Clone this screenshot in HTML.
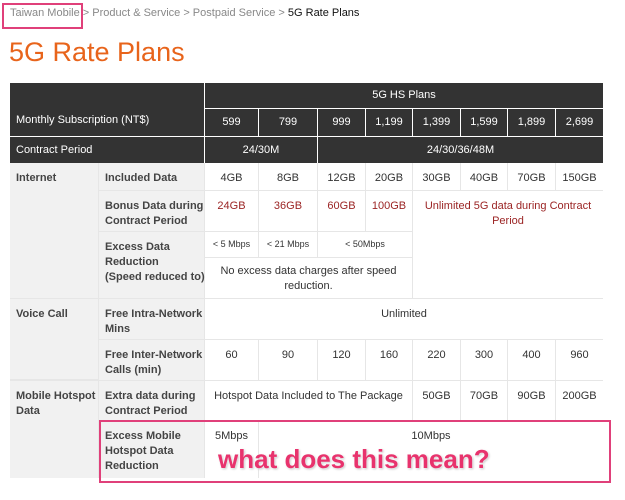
<!DOCTYPE html>
<html><head><meta charset="utf-8"><style>
*{margin:0;padding:0;box-sizing:border-box}
body{width:625px;height:500px;background:#fff;font-family:"Liberation Sans",Arial,sans-serif;position:relative;overflow:hidden}
.a{position:absolute}
.c{position:absolute;display:flex;align-items:center;justify-content:center;text-align:center;font-size:11px;color:#333;line-height:15px}
.d{background:#333;color:#fff}
.l{justify-content:flex-start;text-align:left;padding-left:6px;align-items:flex-start;padding-top:8px}
.g{background:#f1f1f1}
.b{font-weight:bold;color:#444}
.n{white-space:nowrap}
.t{align-items:flex-start;padding-top:8px}
.r{color:#9b2424}
.w{background:#fff}
</style></head><body>
<div class="a" style="left:10px;top:7px;font-size:11px;color:#888;white-space:nowrap">Taiwan Mobile &gt; Product &amp; Service &gt; Postpaid Service &gt; <span style="color:#111">5G Rate Plans</span></div>
<div class="a" style="left:2px;top:3px;width:81px;height:26px;border:2px solid #e0407a"></div>
<div class="a" style="left:9px;top:37px;font-size:27px;color:#e8641b">5G Rate Plans</div>

<div class="a" style="left:10px;top:83px;width:593px;height:80px;background:#fff"></div>
<div class="c d l" style="left:10px;top:83px;width:194px;height:53px;align-items:flex-end;padding-bottom:8px">Monthly Subscription (NT$)</div>
<div class="c d" style="left:205px;top:83px;width:398px;height:25px">5G HS Plans</div>
<div class="c d" style="left:205px;top:109px;width:53px;height:27px">599</div>
<div class="c d" style="left:259px;top:109px;width:58px;height:27px">799</div>
<div class="c d" style="left:318px;top:109px;width:47px;height:27px">999</div>
<div class="c d" style="left:366px;top:109px;width:46px;height:27px">1,199</div>
<div class="c d" style="left:413px;top:109px;width:47px;height:27px">1,399</div>
<div class="c d" style="left:461px;top:109px;width:46px;height:27px">1,599</div>
<div class="c d" style="left:508px;top:109px;width:47px;height:27px">1,899</div>
<div class="c d" style="left:556px;top:109px;width:47px;height:27px">2,699</div>
<div class="c d l" style="left:10px;top:137px;width:194px;height:26px;align-items:center;padding-top:0">Contract Period</div>
<div class="c d" style="left:205px;top:137px;width:112px;height:26px">24/30M</div>
<div class="c d" style="left:318px;top:137px;width:285px;height:26px">24/30/36/48M</div>

<div class="a" style="left:10px;top:163px;width:593px;height:315px;background:#e6e6e6"></div>
<div class="c g b l" style="left:10px;top:163px;width:88px;height:135px">Internet</div>
<div class="c g b l" style="left:10px;top:299px;width:88px;height:80px">Voice Call</div>
<div class="c g b l" style="left:10px;top:381px;width:88px;height:97px">Mobile Hotspot Data</div>

<div class="c g b l n" style="left:99px;top:163px;width:105px;height:27px">Included Data</div>
<div class="c g b l n" style="left:99px;top:191px;width:105px;height:40px">Bonus Data during<br>Contract Period</div>
<div class="c g b l n" style="left:99px;top:232px;width:105px;height:66px">Excess Data<br>Reduction<br>(Speed reduced to)</div>
<div class="c g b l n" style="left:99px;top:299px;width:105px;height:40px">Free Intra-Network<br>Mins</div>
<div class="c g b l n" style="left:99px;top:340px;width:105px;height:40px">Free Inter-Network<br>Calls (min)</div>
<div class="c g b l n" style="left:99px;top:381px;width:105px;height:39px">Extra data during<br>Contract Period</div>
<div class="c g b l n" style="left:99px;top:421px;width:105px;height:57px">Excess Mobile<br>Hotspot Data<br>Reduction</div>

<div class="c w t" style="left:205px;top:163px;width:53px;height:27px">4GB</div>
<div class="c w t" style="left:259px;top:163px;width:58px;height:27px">8GB</div>
<div class="c w t" style="left:318px;top:163px;width:47px;height:27px">12GB</div>
<div class="c w t" style="left:366px;top:163px;width:46px;height:27px">20GB</div>
<div class="c w t" style="left:413px;top:163px;width:47px;height:27px">30GB</div>
<div class="c w t" style="left:461px;top:163px;width:46px;height:27px">40GB</div>
<div class="c w t" style="left:508px;top:163px;width:47px;height:27px">70GB</div>
<div class="c w t" style="left:556px;top:163px;width:47px;height:27px">150GB</div>
<div class="c w t r" style="left:205px;top:191px;width:53px;height:40px">24GB</div>
<div class="c w t r" style="left:259px;top:191px;width:58px;height:40px">36GB</div>
<div class="c w t r" style="left:318px;top:191px;width:47px;height:40px">60GB</div>
<div class="c w t r" style="left:366px;top:191px;width:46px;height:40px">100GB</div>
<div class="c w t r" style="left:413px;top:191px;width:190px;height:107px;padding-left:10px;padding-right:10px">Unlimited 5G data during Contract Period</div>
<div class="c w" style="left:205px;top:232px;width:53px;height:25px;font-size:9px">&lt; 5 Mbps</div>
<div class="c w" style="left:259px;top:232px;width:58px;height:25px;font-size:9px">&lt; 21 Mbps</div>
<div class="c w" style="left:318px;top:232px;width:94px;height:25px;font-size:9px">&lt; 50Mbps</div>
<div class="c w t" style="left:205px;top:258px;width:207px;height:40px;padding:6px 14px 0">No excess data charges after speed reduction.</div>
<div class="c w t" style="left:205px;top:299px;width:398px;height:40px">Unlimited</div>
<div class="c w t" style="left:205px;top:340px;width:53px;height:40px">60</div>
<div class="c w t" style="left:259px;top:340px;width:58px;height:40px">90</div>
<div class="c w t" style="left:318px;top:340px;width:47px;height:40px">120</div>
<div class="c w t" style="left:366px;top:340px;width:46px;height:40px">160</div>
<div class="c w t" style="left:413px;top:340px;width:47px;height:40px">220</div>
<div class="c w t" style="left:461px;top:340px;width:46px;height:40px">300</div>
<div class="c w t" style="left:508px;top:340px;width:47px;height:40px">400</div>
<div class="c w t" style="left:556px;top:340px;width:47px;height:40px">960</div>
<div class="c w t" style="left:205px;top:381px;width:207px;height:39px">Hotspot Data Included to The Package</div>
<div class="c w t" style="left:413px;top:381px;width:47px;height:39px">50GB</div>
<div class="c w t" style="left:461px;top:381px;width:46px;height:39px">70GB</div>
<div class="c w t" style="left:508px;top:381px;width:47px;height:39px">90GB</div>
<div class="c w t" style="left:556px;top:381px;width:47px;height:39px">200GB</div>
<div class="c w t" style="left:205px;top:421px;width:53px;height:57px">5Mbps</div>
<div class="c w t" style="left:259px;top:421px;width:344px;height:57px">10Mbps</div>

<div class="a" style="left:99px;top:420px;width:512px;height:63px;border:2px solid #e0407a"></div>
<div class="a" style="left:218px;top:444px;font-size:26px;font-weight:900;color:#e8336d;white-space:nowrap;text-shadow:0 0 2px #fff,1px 1px 2px #bbb">what does this mean?</div>
</body></html>
